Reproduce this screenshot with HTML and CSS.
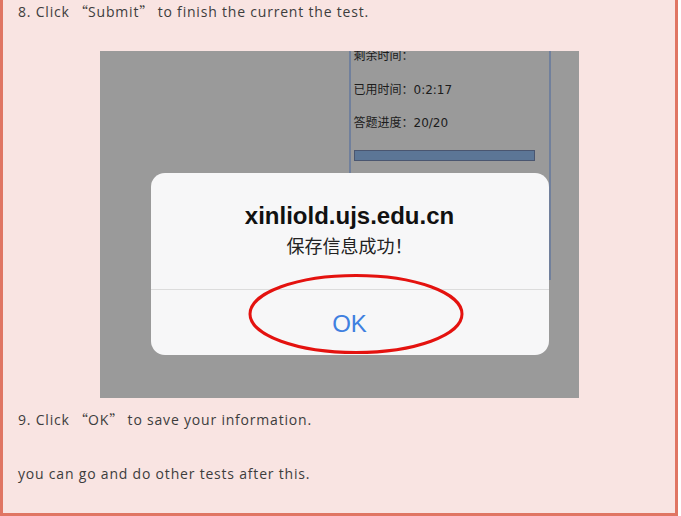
FILE: index.html
```html
<!DOCTYPE html>
<html lang="en">
<head>
  <meta charset="UTF-8">
  <meta name="viewport" content="width=device-width, initial-scale=1.0">
  <title>Online Test Guide</title>
  <link rel="stylesheet" href="styles.css">
</head>
<body>
  <div class="guide">
    <p class="step">8. Click <span class="q">“</span>Submit<span class="q">”</span> to finish the current the test.</p>

    <div class="shot">
      <div class="panel">
        <div class="row">剩余时间：</div>
        <div class="row">已用时间：0:2:17</div>
        <div class="row">答题进度：20/20</div>
        <div class="bar"></div>
      </div>

      <div class="alert">
        <div class="alert-body">
          <div class="alert-title">xinliold.ujs.edu.cn</div>
          <div class="alert-msg">保存信息成功！</div>
        </div>
        <div class="alert-btn">OK</div>
      </div>

      <!-- red mark round the OK button -->
      <svg class="mark" width="220" height="84" viewBox="0 0 220 84">
        <ellipse cx="110" cy="42" rx="106" ry="38.5" fill="none" stroke="#e4120f" stroke-width="3"/>
      </svg>
    </div>

    <p class="step step-9">9. Click <span class="q">“</span>OK<span class="q">”</span> to save your information.</p>

    <p class="step step-last">you can go and do other tests after this.</p>
  </div>
</body>
</html>
```

FILE: styles.css
```css
/* guide page */
body, html {
  margin: 0;
  padding: 0;
  background: #fff;
}

.guide {
  width: 678px;
  box-sizing: border-box;
  background-color: #f9e4e2;
  border: 3px solid #e07563;
  border-top: none;
  padding: 0 15px 28px;
  font-family: "Open Sans", "Noto Sans CJK SC", sans-serif;
  font-size: 14px;
  letter-spacing: 0.8px;
  color: #3d3d3d;
}

.step {
  margin: 0;
  line-height: 22px;
}

.q {
  font-family: "Noto Sans CJK SC", sans-serif;
  letter-spacing: 0;
}

.step-9 {
  margin-top: 10px;
}

.step-last {
  margin-top: 32px;
}

/* dimmed screenshot */
.shot {
  position: relative;
  width: 479px;
  height: 347px;
  margin: 28px auto 0;
  background-color: #9a9a9a;
  overflow: hidden;
  letter-spacing: 0;
}

.panel {
  margin: -11px 0 0 249px;
  width: 195px;
  height: 240px;
  padding: 0 0 0 3px;
  border-left: 2px solid #71809c;
  border-right: 2px solid #71809c;
  font-family: "DejaVu Sans", "Noto Sans CJK SC", sans-serif;
  font-size: 12px;
  color: #1c1c1c;
}

.row {
  line-height: 33.5px;
}

.bar {
  margin-top: 9px;
  width: 179px;
  height: 9px;
  background-color: #5c7696;
  border: 1px solid #4a5670;
}

/* alert box over the screenshot */
.alert {
  position: absolute;
  left: 51px;
  top: 122px;
  width: 398px;
  height: 182px;
  border-radius: 14px;
  background-color: #f7f7f8;
  display: flex;
  flex-direction: column;
  text-align: center;
}

.alert-body {
  height: 117px;
  border-bottom: 1px solid #dcdcdc;
  box-sizing: border-box;
  padding-top: 28px;
}

.alert-title {
  font-family: "Liberation Sans", sans-serif;
  font-weight: bold;
  font-size: 24px;
  line-height: 30px;
  color: #111;
}

.alert-msg {
  font-family: "Noto Sans CJK SC", sans-serif;
  font-size: 18px;
  line-height: 28px;
  color: #222;
}

.alert-btn {
  flex: 1;
  display: flex;
  align-items: center;
  justify-content: center;
  font-family: "Liberation Sans", sans-serif;
  font-size: 24px;
  color: #3f80e0;
  padding-top: 2px;
}

.mark {
  position: absolute;
  left: 146px;
  top: 221px;
}
```
